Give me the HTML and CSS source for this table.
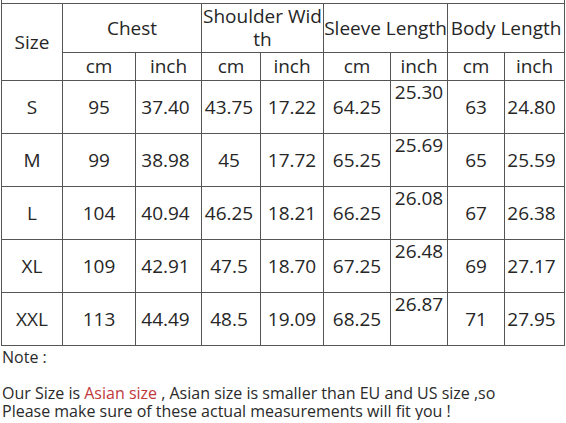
FILE: index.html
```html
<!DOCTYPE html>
<html>
<head>
<meta charset="utf-8">
<link rel="stylesheet" href="styles.css">
</head>
<body>
<table class="size-table">
  <colgroup>
    <col class="c1"><col class="c2"><col class="c3"><col class="c4"><col class="c5"><col class="c6"><col class="c7"><col class="c8"><col class="c9">
  </colgroup>
  <tr class="gap"><td colspan="9"></td></tr>
  <tr class="head1">
    <td rowspan="2">Size</td>
    <td colspan="2">Chest</td>
    <td colspan="2" class="wrap">Shoulder Width</td>
    <td colspan="2">Sleeve Length</td>
    <td colspan="2">Body Length</td>
  </tr>
  <tr class="head2">
    <td>cm</td><td>inch</td><td>cm</td><td>inch</td><td>cm</td><td>inch</td><td>cm</td><td>inch</td>
  </tr>
  <tr class="row">
    <td>S</td><td>95</td><td class="pr">37.40</td><td class="pr-s">43.75</td><td>17.22</td><td>64.25</td><td class="top">25.30</td><td>63</td><td class="pr">24.80</td>
  </tr>
  <tr class="row">
    <td>M</td><td>99</td><td class="pr">38.98</td><td class="pr-s">45</td><td>17.72</td><td>65.25</td><td class="top">25.69</td><td>65</td><td class="pr">25.59</td>
  </tr>
  <tr class="row">
    <td>L</td><td>104</td><td class="pr">40.94</td><td class="pr-s">46.25</td><td>18.21</td><td>66.25</td><td class="top">26.08</td><td>67</td><td class="pr">26.38</td>
  </tr>
  <tr class="row">
    <td>XL</td><td>109</td><td class="pr">42.91</td><td class="pr-s">47.5</td><td>18.70</td><td>67.25</td><td class="top">26.48</td><td>69</td><td class="pr">27.17</td>
  </tr>
  <tr class="row">
    <td>XXL</td><td>113</td><td class="pr">44.49</td><td class="pr-s">48.5</td><td>19.09</td><td>68.25</td><td class="top">26.87</td><td>71</td><td class="pr">27.95</td>
  </tr>
</table>
<div class="note">
  <p>Note :</p>
  <p class="blank">&nbsp;</p>
  <p>Our Size is <span class="red">Asian size</span> , Asian size is smaller than EU and US size ,so</p>
  <p>Please make sure of these actual measurements will fit you !</p>
</div>
</body>
</html>
```
FILE: styles.css
```css
html, body {
  margin: 0;
  padding: 0;
  background: #ffffff;
}
body {
  padding-left: 1px;
  font-family: "Open Sans", "Liberation Sans", sans-serif;
  color: #2a2a2a;
}
.size-table {
  border-collapse: collapse;
  table-layout: fixed;
  width: 563px;
  font-size: 19px;
  line-height: 23px;
  color: #262626;
}
.c1 { width: 61px; }
.c2 { width: 73px; }
.c3 { width: 66px; }
.c4 { width: 59px; }
.c5 { width: 63px; }
.c6 { width: 67px; }
.c7 { width: 57px; }
.c8 { width: 57px; }
.c9 { width: 60px; }
.size-table td {
  border: 1px solid #555555;
  padding: 0;
  text-align: center;
  vertical-align: middle;
  white-space: nowrap;
  overflow: visible;
}
.size-table .gap td {
  border-top: none;
  height: 3px;
}
.head1 td { height: 48px; }
.head2 td { height: 27px; }
.row td { height: 52px; }
.size-table td.wrap {
  white-space: normal;
  word-break: break-all;
  padding: 0;
}
.size-table td.top {
  vertical-align: top;
}
.size-table td.pr {
  padding-right: 6px;
}
.size-table td.pr-s {
  padding-right: 4px;
}
.note {
  font-size: 16px;
  line-height: 18px;
  padding-top: 2px;
  padding-left: 1px;
  color: #2a2a2a;
}
.note p {
  margin: 0;
}
.red {
  color: #c0393b;
}
```
